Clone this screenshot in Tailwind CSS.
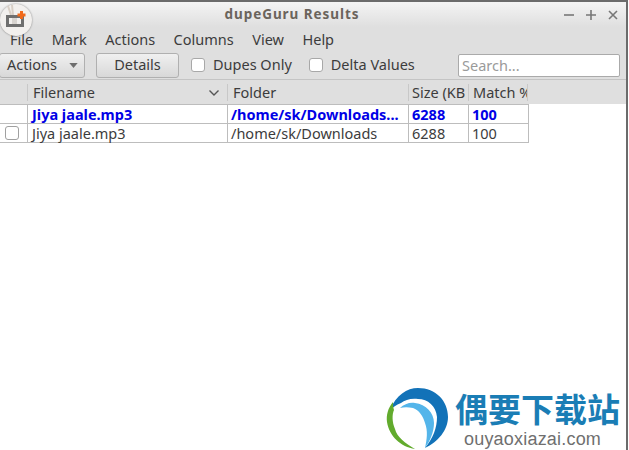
<!DOCTYPE html>
<html lang="en">
<head>
    <meta charset="UTF-8">
    <title>dupeGuru Results</title>
    <script src="https://cdn.jsdelivr.net/npm/@tailwindcss/browser@4"></script>
</head>
<body class="bg-white overflow-hidden font-['Noto_Sans',sans-serif] text-[14.5px] text-[#3c3c3c]">
<div class="relative w-[629px] h-[450px] overflow-hidden">
    <!-- window frame -->
    <div class="w-[628px] h-[450px] border-t-2 border-r-2 border-[#6b6b6b] bg-white flex flex-col">
        <!-- title bar -->
        <div class="h-[25px] shrink-0 flex items-center bg-gradient-to-b from-[#f4f4f4] to-[#dfdfdf]">
            <div class="flex-1 text-center font-bold text-[13.5px] tracking-[0.95px] text-[#6b645c] pl-[20px]">dupeGuru Results</div>
            <div class="flex items-center gap-[12px] pr-[8px] text-[#777]">
                <svg width="10" height="10" viewBox="0 0 10 10"><path d="M0 5H10" stroke="currentColor" stroke-width="1.6"/></svg>
                <svg width="10" height="10" viewBox="0 0 10 10"><path d="M0 5H10M5 0V10" stroke="currentColor" stroke-width="1.6"/></svg>
                <svg width="10" height="10" viewBox="0 0 10 10"><path d="M1 1L9 9M9 1L1 9" stroke="currentColor" stroke-width="1.6"/></svg>
            </div>
        </div>
        <!-- menu -->
        <div class="h-[25px] shrink-0 bg-[#dfdfdf] flex items-center pl-[10px] gap-[18.5px]">
            <span>File</span><span>Mark</span><span>Actions</span><span>Columns</span><span>View</span><span>Help</span>
        </div>
        <!-- toolbar -->
        <div class="h-[28px] shrink-0 bg-[#dfdfdf] border-b border-[#c4c4c4] flex items-center pb-[1px]">
            <div class="w-[86px] h-[25px] ml-[-1px] border border-[#b0b0b0] rounded-[3px] bg-gradient-to-b from-[#f0f0f0] to-[#d8d8d8] flex items-center justify-between pl-[7px] pr-[6px]">
                <span>Actions</span>
                <svg width="9" height="5" viewBox="0 0 10 6"><path d="M0 0H10L5 6Z" fill="#6e6e6e"/></svg>
            </div>
            <div class="w-[83px] h-[25px] ml-[11px] border border-[#b0b0b0] rounded-[3px] bg-gradient-to-b from-[#f0f0f0] to-[#d8d8d8] flex items-center justify-center">Details</div>
            <span class="w-[14px] h-[14px] ml-[12px] border border-[#a8a8a8] rounded-[3px] bg-white"></span>
            <span class="ml-[8px]">Dupes Only</span>
            <span class="w-[14px] h-[14px] ml-[17px] border border-[#a8a8a8] rounded-[3px] bg-white"></span>
            <span class="ml-[8px]">Delta Values</span>
            <div class="w-[162px] h-[23px] ml-auto mr-[6px] border border-[#aaa] rounded-[2px] bg-white flex items-center pl-[3px] pt-[1px] text-[#9a9a9a]">Search...</div>
        </div>
        <!-- table -->
        <div class="h-[24px] shrink-0 bg-[#dfdfdf] flex items-center pt-[1px]">
            <div class="w-[528px] flex h-full items-center">
                <div class="w-[28px] h-[17px] border-r border-[#c8c8c8]"></div>
                <div class="w-[200px] h-[17px] border-r border-[#c8c8c8] pl-[5px] flex items-center justify-between pr-[8px]">
                    <span>Filename</span>
                    <svg width="10" height="6" viewBox="0 0 10 6"><path d="M0.5 0.500L5 5L9.500 0.500" fill="none" stroke="#555" stroke-width="1.400"/></svg>
                </div>
                <div class="w-[181px] h-[17px] border-r border-[#c8c8c8] pl-[5px] flex items-center">Folder</div>
                <div class="w-[60px] h-[17px] border-r border-[#c8c8c8] pl-[3px] flex items-center overflow-hidden whitespace-nowrap">Size (KB</div>
                <div class="w-[59px] h-[17px] border-r border-[#c8c8c8] pl-[4px] flex items-center overflow-hidden whitespace-nowrap">Match %</div>
            </div>
        </div>
        <div class="w-[529px] border-t border-r border-[#bdbdbd] grid grid-cols-[28px_200px_181px_60px_59px]">
            <div class="h-[19px] border-b border-r border-[#bdbdbd]"></div>
            <div class="h-[19px] pt-[1px] border-b border-r border-[#bdbdbd] pl-[4px] font-bold text-[#0000e6] flex items-center">Jiya jaale.mp3</div>
            <div class="h-[19px] pt-[1px] border-b border-r border-[#bdbdbd] pl-[3px] font-bold text-[#0000e6] flex items-center whitespace-nowrap">/home/sk/Downloads...</div>
            <div class="h-[19px] pt-[1px] border-b border-r border-[#bdbdbd] pl-[3px] font-bold text-[#0000e6] flex items-center">6288</div>
            <div class="h-[19px] pt-[1px] border-b border-[#bdbdbd] pl-[3px] font-bold text-[#0000e6] flex items-center">100</div>

            <div class="h-[19px] border-b border-r border-[#bdbdbd] flex items-center pl-[5px]"><span class="w-[14px] h-[14px] border border-[#a0a0a0] rounded-[3px] bg-white"></span></div>
            <div class="h-[19px] pt-[1px] border-b border-r border-[#bdbdbd] pl-[4px] flex items-center">Jiya jaale.mp3</div>
            <div class="h-[19px] pt-[1px] border-b border-r border-[#bdbdbd] pl-[3px] flex items-center">/home/sk/Downloads</div>
            <div class="h-[19px] pt-[1px] border-b border-r border-[#bdbdbd] pl-[3px] flex items-center">6288</div>
            <div class="h-[19px] pt-[1px] border-b border-[#bdbdbd] pl-[3px] flex items-center">100</div>
        </div>
    </div>

    <!-- app icon overlapping the title bar -->
    <div class="absolute left-0 top-[4px] w-[32px] h-[32px] rounded-full bg-[#f2f0ee] shadow-[0_0_2px_rgba(0,0,0,0.45)]">
        <svg width="32" height="32" viewBox="0 0 32 32">
            <path d="M8 2L11 11M12 1L13 11" stroke="#d8cfc6" stroke-width="2" fill="none"/>
            <path d="M7.500 12.500H22.500V21.500H7.500Z" fill="none" stroke="#6f6f6f" stroke-width="3"/>
            <path d="M12 14H17V20H12Z" fill="#d8d4d0"/>
            <path d="M21.500 7V15M17.500 11H25.500" stroke="#f26a1b" stroke-width="3"/>
        </svg>
    </div>

    <!-- watermark -->
    <div class="absolute left-[386px] top-[388px] w-[243px] h-[62px] flex">
        <svg width="64" height="62" viewBox="0 0 64 62" class="shrink-0">
            <path d="M4 22C10 7 21 0 32 0C50 0 62 13 62 29C62 42 52 54 39 60C47 50 51 40 51 29C50 18 42 11 32 11C25 10 19 12 15 15C10 17 7 19 4 22Z" fill="#1272b8"/>
            <path d="M7 14C2 20 0 27 1 34C3 48 15 59 29 61C19 55 11 49 9 41C6 34 6 26 8 22C7 19 7 17 7 14Z" fill="#62ab2d"/>
            <path d="M14 20C18 16 24 14 29 15C40 16 48 25 48 35C48 44 44 53 39 60C41 51 42 43 39 35C37 28 33 22 27 20C22 19 18 19 14 20Z" fill="#54b5ea"/>
        </svg>
        <div class="ml-[5px] flex flex-col">
            <div class="h-[41px] flex items-center font-['Noto_Sans_CJK_SC',sans-serif] font-bold text-[33px] leading-[33px] text-[#1a7db5] whitespace-nowrap">偶要下载站</div>
            <div class="font-['Liberation_Sans',sans-serif] text-[18px] leading-[20px] tracking-[0.2px] text-[#6f6f6f] pl-[9px]">ouyaoxiazai.com</div>
        </div>
    </div>
</div>
</body>
</html>
